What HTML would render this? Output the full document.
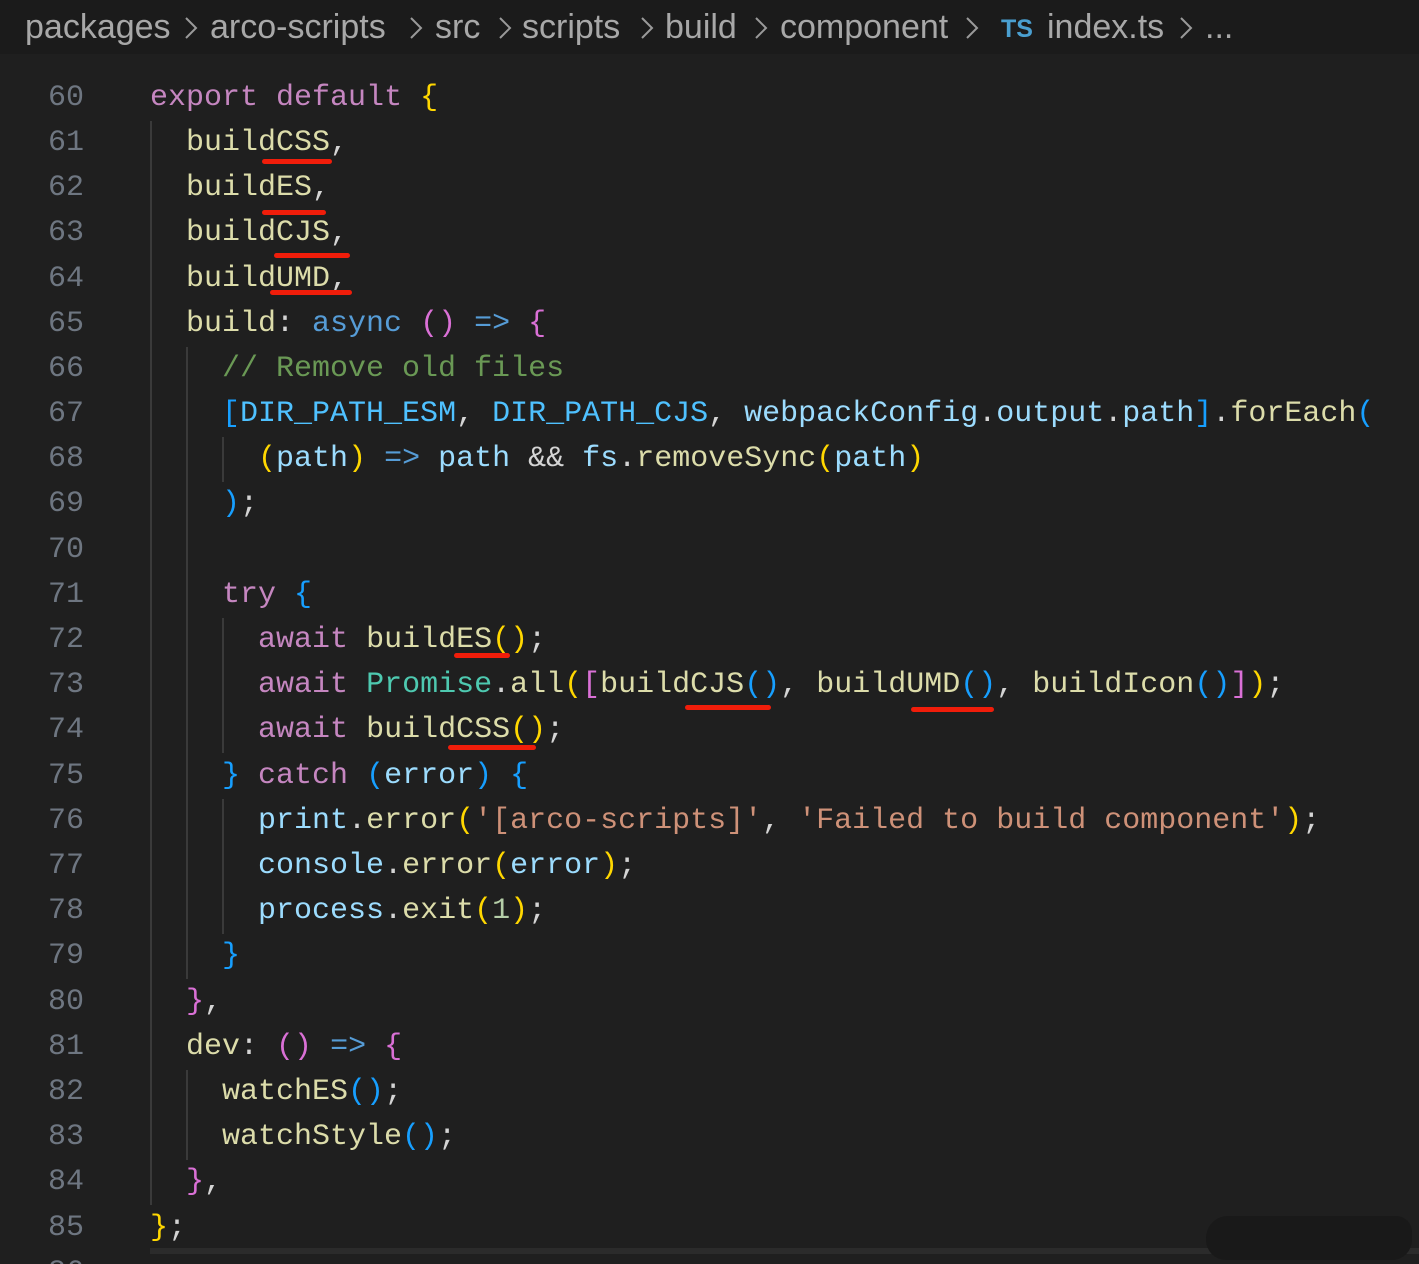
<!DOCTYPE html>
<html><head><meta charset="utf-8"><style>
html,body{margin:0;padding:0;background:#1f1f1f;width:1419px;height:1264px;overflow:hidden;position:relative}
.bc{position:absolute;left:0;top:0;width:1419px;height:54px;background:#1b1b1b;font-family:"Liberation Sans",sans-serif;font-size:34px;color:#a8a8a8;z-index:5}
.bc span{position:absolute;top:8px;line-height:38px;white-space:pre}
.bc svg{position:absolute;top:16px}
.bc .ts{color:#4a9fd0;font-weight:bold;font-size:25px}
.ln{position:absolute;left:0;width:84px;text-align:right;color:#6e7681;font-family:"Liberation Mono",monospace;font-size:30px;line-height:45px;margin-top:3px}
.cd{position:absolute;left:150px;font-family:"Liberation Mono",monospace;font-size:30px;line-height:45px;white-space:pre;color:#d4d4d4;margin-top:3px}
.k{color:#c586c0}.f{color:#dcdcaa}.v{color:#9cdcfe}.c{color:#4fc1ff}.s{color:#ce9178}.m{color:#6a9955}
.g{color:#ffd700}.p{color:#da70d6}.b{color:#179fff}.st{color:#569cd6}.t{color:#4ec9b0}.n{color:#b5cea8}
.guide{position:absolute;width:2px;background:#3a3a3a}
.ul{position:absolute;height:5px;background:#f01d0a;border-radius:3px}
</style></head><body>
<div class="bc">
<span style="left:25px">packages</span>
<svg style="left:184px" width="14" height="24" viewBox="0 0 14 24"><path d="M2 2 L12 12 L2 22" fill="none" stroke="#9a9a9a" stroke-width="2"/></svg>
<span style="left:210px">arco-scripts</span>
<svg style="left:409px" width="14" height="24" viewBox="0 0 14 24"><path d="M2 2 L12 12 L2 22" fill="none" stroke="#9a9a9a" stroke-width="2"/></svg>
<span style="left:435px">src</span>
<svg style="left:498px" width="14" height="24" viewBox="0 0 14 24"><path d="M2 2 L12 12 L2 22" fill="none" stroke="#9a9a9a" stroke-width="2"/></svg>
<span style="left:522px">scripts</span>
<svg style="left:640px" width="14" height="24" viewBox="0 0 14 24"><path d="M2 2 L12 12 L2 22" fill="none" stroke="#9a9a9a" stroke-width="2"/></svg>
<span style="left:665px">build</span>
<svg style="left:754px" width="14" height="24" viewBox="0 0 14 24"><path d="M2 2 L12 12 L2 22" fill="none" stroke="#9a9a9a" stroke-width="2"/></svg>
<span style="left:780px">component</span>
<svg style="left:965px" width="14" height="24" viewBox="0 0 14 24"><path d="M2 2 L12 12 L2 22" fill="none" stroke="#9a9a9a" stroke-width="2"/></svg>
<span class="ts" style="left:1001px;top:10px">TS</span>
<span style="left:1047px">index.ts</span>
<svg style="left:1179px" width="14" height="24" viewBox="0 0 14 24"><path d="M2 2 L12 12 L2 22" fill="none" stroke="#9a9a9a" stroke-width="2"/></svg>
<span style="left:1205px">...</span>
</div>

<div class="ln" style="top:51px;height:10px;overflow:hidden;margin-top:0"><div style="margin-top:-32px">59</div></div>

<div class="ln" style="top:73px">60</div><div class="cd" style="top:73px"><span class="k">export</span> <span class="k">default</span> <span class="g">{</span></div>
<div class="ln" style="top:118px">61</div><div class="cd" style="top:118px">  <span class="f">buildCSS</span>,</div>
<div class="ln" style="top:163px">62</div><div class="cd" style="top:163px">  <span class="f">buildES</span>,</div>
<div class="ln" style="top:208px">63</div><div class="cd" style="top:208px">  <span class="f">buildCJS</span>,</div>
<div class="ln" style="top:254px">64</div><div class="cd" style="top:254px">  <span class="f">buildUMD</span>,</div>
<div class="ln" style="top:299px">65</div><div class="cd" style="top:299px">  <span class="f">build</span>: <span class="st">async</span> <span class="p">()</span> <span class="st">=&gt;</span> <span class="p">{</span></div>
<div class="ln" style="top:344px">66</div><div class="cd" style="top:344px">    <span class="m">// Remove old files</span></div>
<div class="ln" style="top:389px">67</div><div class="cd" style="top:389px">    <span class="b">[</span><span class="c">DIR_PATH_ESM</span>, <span class="c">DIR_PATH_CJS</span>, <span class="v">webpackConfig</span>.<span class="v">output</span>.<span class="v">path</span><span class="b">]</span>.<span class="f">forEach</span><span class="b">(</span></div>
<div class="ln" style="top:434px">68</div><div class="cd" style="top:434px">      <span class="g">(</span><span class="v">path</span><span class="g">)</span> <span class="st">=&gt;</span> <span class="v">path</span> &amp;&amp; <span class="v">fs</span>.<span class="f">removeSync</span><span class="g">(</span><span class="v">path</span><span class="g">)</span></div>
<div class="ln" style="top:479px">69</div><div class="cd" style="top:479px">    <span class="b">)</span>;</div>
<div class="ln" style="top:525px">70</div>
<div class="ln" style="top:570px">71</div><div class="cd" style="top:570px">    <span class="k">try</span> <span class="b">{</span></div>
<div class="ln" style="top:615px">72</div><div class="cd" style="top:615px">      <span class="k">await</span> <span class="f">buildES</span><span class="g">()</span>;</div>
<div class="ln" style="top:660px">73</div><div class="cd" style="top:660px">      <span class="k">await</span> <span class="t">Promise</span>.<span class="f">all</span><span class="g">(</span><span class="p">[</span><span class="f">buildCJS</span><span class="b">()</span>, <span class="f">buildUMD</span><span class="b">()</span>, <span class="f">buildIcon</span><span class="b">()</span><span class="p">]</span><span class="g">)</span>;</div>
<div class="ln" style="top:705px">74</div><div class="cd" style="top:705px">      <span class="k">await</span> <span class="f">buildCSS</span><span class="g">()</span>;</div>
<div class="ln" style="top:751px">75</div><div class="cd" style="top:751px">    <span class="b">}</span> <span class="k">catch</span> <span class="b">(</span><span class="v">error</span><span class="b">)</span> <span class="b">{</span></div>
<div class="ln" style="top:796px">76</div><div class="cd" style="top:796px">      <span class="v">print</span>.<span class="f">error</span><span class="g">(</span><span class="s">'[arco-scripts]'</span>, <span class="s">'Failed to build component'</span><span class="g">)</span>;</div>
<div class="ln" style="top:841px">77</div><div class="cd" style="top:841px">      <span class="v">console</span>.<span class="f">error</span><span class="g">(</span><span class="v">error</span><span class="g">)</span>;</div>
<div class="ln" style="top:886px">78</div><div class="cd" style="top:886px">      <span class="v">process</span>.<span class="f">exit</span><span class="g">(</span><span class="n">1</span><span class="g">)</span>;</div>
<div class="ln" style="top:931px">79</div><div class="cd" style="top:931px">    <span class="b">}</span></div>
<div class="ln" style="top:977px">80</div><div class="cd" style="top:977px">  <span class="p">}</span>,</div>
<div class="ln" style="top:1022px">81</div><div class="cd" style="top:1022px">  <span class="f">dev</span>: <span class="p">()</span> <span class="st">=&gt;</span> <span class="p">{</span></div>
<div class="ln" style="top:1067px">82</div><div class="cd" style="top:1067px">    <span class="f">watchES</span><span class="b">()</span>;</div>
<div class="ln" style="top:1112px">83</div><div class="cd" style="top:1112px">    <span class="f">watchStyle</span><span class="b">()</span>;</div>
<div class="ln" style="top:1157px">84</div><div class="cd" style="top:1157px">  <span class="p">}</span>,</div>
<div class="ln" style="top:1203px">85</div><div class="cd" style="top:1203px"><span class="g">}</span>;</div>
<div class="ln" style="top:1248px">86</div>

<div class="guide" style="left:150px;top:121px;height:1084px"></div>
<div class="guide" style="left:186px;top:347px;height:632px"></div>
<div class="guide" style="left:186px;top:1070px;height:90px"></div>
<div class="guide" style="left:222px;top:437px;height:45px"></div>
<div class="guide" style="left:222px;top:618px;height:135px"></div>
<div class="guide" style="left:222px;top:799px;height:135px"></div>

<div class="ul" style="left:262px;top:159px;width:70px"></div>
<div class="ul" style="left:262px;top:210px;width:64px"></div>
<div class="ul" style="left:274px;top:253px;width:76px"></div>
<div class="ul" style="left:270px;top:290px;width:82px"></div>
<div class="ul" style="left:454px;top:653px;width:56px"></div>
<div class="ul" style="left:685px;top:705px;width:86px"></div>
<div class="ul" style="left:911px;top:707px;width:83px"></div>
<div class="ul" style="left:448px;top:745px;width:88px"></div>

<div style="position:absolute;left:150px;top:1248px;width:1269px;height:6px;background:#2b2b2b"></div>
<div style="position:absolute;left:1206px;top:1216px;width:206px;height:44px;background:#191919;border-radius:22px 16px 20px 20px"></div>
</body></html>
